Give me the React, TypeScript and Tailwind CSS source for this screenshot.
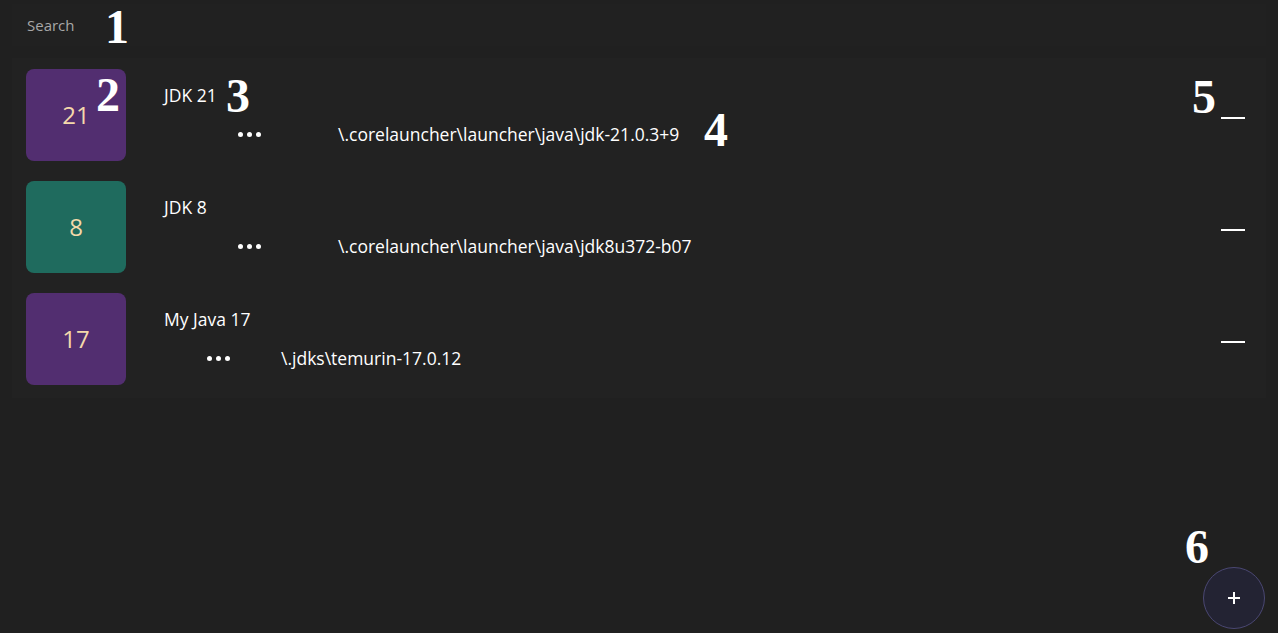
import React from 'react';

interface JavaEntry {
  version: string;
  name: string;
  path: string;
  color: string;
  dotsOffset: string;
  pathOffset: string;
}

const entries: JavaEntry[] = [
  { version: '21', name: 'JDK 21', path: '\\.corelauncher\\launcher\\java\\jdk-21.0.3+9', color: 'bg-[#522e70]', dotsOffset: 'ml-[74px]', pathOffset: 'ml-[77px]' },
  { version: '8', name: 'JDK 8', path: '\\.corelauncher\\launcher\\java\\jdk8u372-b07', color: 'bg-[#1f6b5e]', dotsOffset: 'ml-[74px]', pathOffset: 'ml-[77px]' },
  { version: '17', name: 'My Java 17', path: '\\.jdks\\temurin-17.0.12', color: 'bg-[#522e70]', dotsOffset: 'ml-[43px]', pathOffset: 'ml-[51px]' },
];

const Dots: React.FC = () => (
  <div className="flex items-center gap-[4px]">
    <span className="w-[5px] h-[5px] rounded-full bg-white" />
    <span className="w-[5px] h-[5px] rounded-full bg-white" />
    <span className="w-[5px] h-[5px] rounded-full bg-white" />
  </div>
);

const Marker: React.FC<{ n: string; className: string }> = ({ n, className }) => (
  <span className={`absolute text-white font-bold text-[48px] leading-none font-['Liberation_Serif',serif] ${className}`}>{n}</span>
);

const App: React.FC = () => {
  return (
    <div className="relative min-h-screen h-[633px] bg-[#202020] font-['Open_Sans','Noto_Sans',sans-serif] overflow-hidden">
      {/* search */}
      <div className="mx-[12px] pt-[4px]">
        <div className="h-[42px] bg-[#212121] flex items-center px-[15px] text-[15px] text-[#a7a7a7]">Search</div>
      </div>

      {/* java list */}
      <div className="mx-[12px] mt-[12px] bg-[#222222] pt-[11px] pb-[13px] pl-[14px] pr-[21px] flex flex-col gap-[20px]">
        {entries.map((e) => (
          <div key={e.name} className="flex items-center">
            <div className={`w-[100px] h-[92px] rounded-[8px] ${e.color} flex items-center justify-center text-[24px] text-[#f4d9ab]`}>
              {e.version}
            </div>
            <div className="ml-[38px] flex flex-col self-stretch pt-[14px]">
              <div className="text-[17.5px] text-white leading-[24px]">{e.name}</div>
              <div className="flex items-center mt-[15px] h-[24px]">
                <div className={e.dotsOffset}>
                  <Dots />
                </div>
                <div className={`${e.pathOffset} text-[17.5px] text-white`}>{e.path}</div>
              </div>
            </div>
            <div className="ml-auto mt-[5px] w-[24px] h-[2px] bg-white" />
          </div>
        ))}
      </div>

      {/* add button */}
      <button className="absolute right-[13px] bottom-[4px] w-[62px] h-[62px] rounded-full bg-[#232333] border border-[#4a4772] flex items-center justify-center text-white">
        <svg width="14" height="14" viewBox="0 0 14 14" fill="none" stroke="currentColor" strokeWidth="2">
          <path d="M7 1v12M1 7h12" />
        </svg>
      </button>

      {/* annotations */}
      <Marker n="1" className="left-[105px] top-[3px]" />
      <Marker n="2" className="left-[96px] top-[71px]" />
      <Marker n="3" className="left-[226px] top-[72px]" />
      <Marker n="4" className="left-[704px] top-[106px]" />
      <Marker n="5" className="left-[1192px] top-[73px]" />
      <Marker n="6" className="left-[1185px] top-[523px]" />
    </div>
  );
};

export default App;
